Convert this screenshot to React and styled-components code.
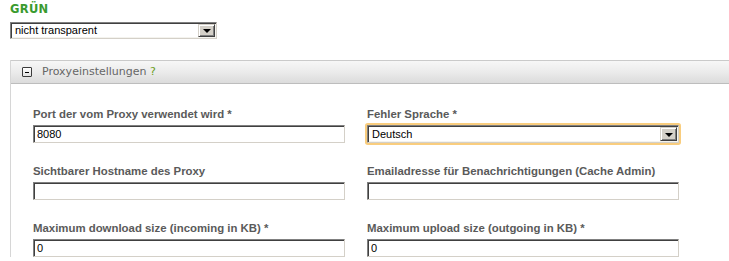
import React from 'react';
import styled, { createGlobalStyle } from 'styled-components';

const Global = createGlobalStyle`
  html, body { margin: 0; padding: 0; background: #fff; }
  body { font-family: "Liberation Sans", Arial, sans-serif; overflow: hidden; }
  * { box-sizing: border-box; }
`;

const Page = styled.div`
  padding: 2px 0 0 10px;
  width: 729px;
  height: 261px;
`;

const ColorTitle = styled.div`
  font-family: "DejaVu Sans", Verdana, sans-serif;
  font-weight: bold;
  font-size: 11.5px;
  letter-spacing: 0.3px;
  line-height: 14px;
  color: #3a9a2e;
`;

const SelectBox = styled.div`
  position: relative;
  display: flex;
  align-items: stretch;
  width: ${p => p.$width}px;
  height: ${p => p.$height}px;
  margin-top: ${p => p.$mt || 0}px;
  background: #fff;
  border: 1px solid;
  border-color: #808080 #d4d0c8 #d4d0c8 #808080;
  box-shadow: inset 1px 1px 0 #404040, inset -1px -1px 0 #f4f3ee
    ${p => (p.$focused ? ', 0 0 0 2px #f9cd7e' : '')};
  border-radius: ${p => (p.$focused ? '1px' : '0')};
  padding: 1px;
`;

const SelectText = styled.div`
  flex: 1;
  font-family: "Liberation Sans", Arial, sans-serif;
  font-size: 11px;
  line-height: ${p => p.$lh}px;
  color: #000;
  padding-left: 3px;
  white-space: nowrap;
`;

const ArrowButton = styled.div`
  width: 17px;
  display: flex;
  align-items: center;
  justify-content: center;
  background: #d4d0c8;
  border: 1px solid;
  border-color: #d4d0c8 #404040 #404040 #d4d0c8;
  box-shadow: inset 1px 1px 0 #fff, inset -1px -1px 0 #808080;
`;

const Triangle = styled.span`
  width: 0;
  height: 0;
  border-left: 4px solid transparent;
  border-right: 4px solid transparent;
  border-top: 4px solid #000;
  margin-top: 1px;
`;

const Panel = styled.div`
  margin-top: 21px;
  border-left: 1px solid #d6d6d6;
`;

const PanelHeader = styled.div`
  display: flex;
  align-items: center;
  height: 24px;
  padding-left: 11px;
  border-top: 1px solid #cacaca;
  border-bottom: 1px solid #bdbdbd;
  background: linear-gradient(#f7f7f7 0%, #f1f1f1 25%, #ebebeb 50%, #e3e3e3 75%, #dcdcdc 100%);
`;

const ToggleIcon = styled.span`
  width: 10px;
  height: 10px;
  border: 1px solid #3c3c3c;
  border-radius: 1px;
  background: linear-gradient(#ffffff, #e2e2e2);
  display: flex;
  align-items: center;
  justify-content: center;
  &::after {
    content: "";
    width: 4px;
    height: 1px;
    background: #000;
  }
`;

const HeaderTitle = styled.span`
  margin-left: 10px;
  font-family: "DejaVu Sans", Verdana, sans-serif;
  font-size: 11px;
  color: #666;
  line-height: 22px;
`;

const Help = styled.span`
  color: #6c9e1e;
`;

const PanelBody = styled.div`
  display: grid;
  grid-template-columns: 312px 312px;
  column-gap: 22px;
  row-gap: 21px;
  padding: 23px 0 0 22px;
`;

const Field = styled.div`
  display: flex;
  flex-direction: column;
  gap: 4px;
`;

const Label = styled.label`
  font-family: "Liberation Sans", Arial, sans-serif;
  font-weight: bold;
  font-size: 11.4px;
  line-height: 14px;
  color: #5a5a5a;
  white-space: nowrap;
`;

const TextInput = styled.input`
  width: 312px;
  height: 18px;
  margin: 0;
  padding: 0 3px;
  background: #fff;
  border: 1px solid;
  border-color: #808080 #d4d0c8 #d4d0c8 #808080;
  box-shadow: inset 1px 1px 0 #404040;
  font-family: "Liberation Sans", Arial, sans-serif;
  font-size: 11px;
  color: #000;
  outline: none;
`;

function Select({ value, width, height, focused, mt }) {
  return (
    <SelectBox role="combobox" $width={width} $height={height} $focused={focused} $mt={mt}>
      <SelectText $lh={height - 4}>{value}</SelectText>
      <ArrowButton><Triangle /></ArrowButton>
    </SelectBox>
  );
}

export default function App() {
  return (
    <>
      <Global />
      <Page>
        <ColorTitle>GRÜN</ColorTitle>
        <Select value="nicht transparent" width={207} height={17} mt={6} />
        <Panel>
          <PanelHeader>
            <ToggleIcon />
            <HeaderTitle>Proxyeinstellungen <Help>?</Help></HeaderTitle>
          </PanelHeader>
          <PanelBody>
            <Field>
              <Label>Port der vom Proxy verwendet wird *</Label>
              <TextInput defaultValue="8080" />
            </Field>
            <Field>
              <Label>Fehler Sprache *</Label>
              <Select value="Deutsch" width={312} height={18} focused />
            </Field>
            <Field>
              <Label>Sichtbarer Hostname des Proxy</Label>
              <TextInput defaultValue="" />
            </Field>
            <Field>
              <Label>Emailadresse für Benachrichtigungen (Cache Admin)</Label>
              <TextInput defaultValue="" />
            </Field>
            <Field>
              <Label>Maximum download size (incoming in KB) *</Label>
              <TextInput defaultValue="0" />
            </Field>
            <Field>
              <Label>Maximum upload size (outgoing in KB) *</Label>
              <TextInput defaultValue="0" />
            </Field>
          </PanelBody>
        </Panel>
      </Page>
    </>
  );
}
